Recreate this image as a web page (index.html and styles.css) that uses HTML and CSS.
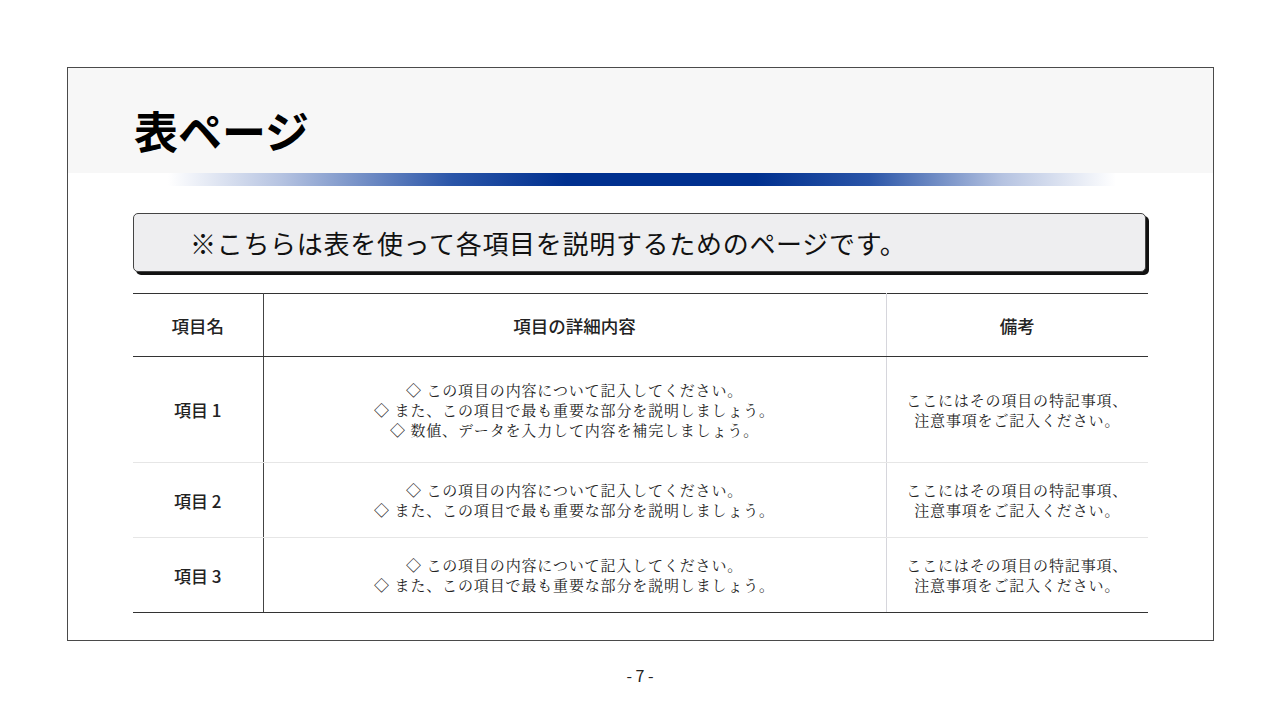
FILE: index.html
```html
<!DOCTYPE html>
<html lang="ja">
<head>
<meta charset="utf-8">
<title>表ページ</title>
<link rel="stylesheet" href="styles.css">
</head>
<body>
<div class="slide">
  <div class="head">
    <h1 class="title">表ページ</h1>
  </div>
  <div class="rule"></div>
  <div class="callout">※こちらは表を使って各項目を説明するためのページです。</div>
  <table class="tbl">
    <colgroup>
      <col class="c1"><col class="c2"><col class="c3">
    </colgroup>
    <thead>
      <tr class="hrow">
        <th class="col-name">項目名</th>
        <th class="col-detail">項目の詳細内容</th>
        <th class="col-note">備考</th>
      </tr>
    </thead>
    <tbody>
      <tr class="r1">
        <td class="col-name">項目 1</td>
        <td class="col-detail serif">◇ この項目の内容について記入してください。<br>◇ また、この項目で最も重要な部分を説明しましょう。<br>◇ 数値、データを入力して内容を補完しましょう。</td>
        <td class="col-note serif">ここにはその項目の特記事項、<br>注意事項をご記入ください。</td>
      </tr>
      <tr class="r2">
        <td class="col-name">項目 2</td>
        <td class="col-detail serif">◇ この項目の内容について記入してください。<br>◇ また、この項目で最も重要な部分を説明しましょう。</td>
        <td class="col-note serif">ここにはその項目の特記事項、<br>注意事項をご記入ください。</td>
      </tr>
      <tr class="r3">
        <td class="col-name">項目 3</td>
        <td class="col-detail serif">◇ この項目の内容について記入してください。<br>◇ また、この項目で最も重要な部分を説明しましょう。</td>
        <td class="col-note serif">ここにはその項目の特記事項、<br>注意事項をご記入ください。</td>
      </tr>
    </tbody>
  </table>
</div>
<div class="pager">- 7 -</div>
</body>
</html>
```

FILE: styles.css
```css
* { box-sizing: border-box; }
html, body { margin: 0; padding: 0; background: #ffffff; }
body {
  font-family: "Noto Sans CJK JP", "Noto Sans", sans-serif;
  color: #1a1a1a;
  width: 1280px;
  height: 720px;
  overflow: hidden;
}
.slide {
  width: 1147px;
  height: 574px;
  margin: 67px 0 0 67px;
  border: 1px solid #4a4a4a;
  background: #ffffff;
}
.head {
  height: 105px;
  background: #f7f7f7;
  padding: 40px 0 0 66px;
}
.title {
  margin: 0;
  font-size: 44px;
  line-height: 44px;
  font-weight: 700;
  color: #000;
}
.rule {
  height: 13px;
  margin-left: 100px;
  width: 948px;
  background: linear-gradient(90deg,
    rgba(255,255,255,0) 0%,
    rgba(120,145,200,0.55) 12%,
    #2a55a8 30%,
    #00308f 42%,
    #00308f 62%,
    #2a55a8 74%,
    rgba(120,145,200,0.55) 88%,
    rgba(255,255,255,0) 100%);
}
.callout {
  margin: 27px 0 0 65px;
  width: 1013px;
  height: 59px;
  border: 1px solid #444;
  border-radius: 5px;
  background: #eeeef0;
  box-shadow: 3px 3px 0 #111;
  padding-left: 56px;
  display: flex;
  align-items: center;
  font-size: 26px;
  font-weight: 400;
  color: #111;
  letter-spacing: 0.7px;
}
.tbl {
  margin: 21px 0 0 65px;
  width: 1015px;
  border-collapse: collapse;
  table-layout: fixed;
}
.c1 { width: 130px; }
.c2 { width: 623px; }
.c3 { width: 262px; }
.tbl th, .tbl td {
  padding: 0;
  text-align: center;
  vertical-align: middle;
}
.tbl th {
  height: 63px;
  font-size: 17.5px;
  font-weight: 500;
  color: #222;
  border-top: 1px solid #333;
  border-bottom: 1px solid #333;
}
.tbl td {
  border-bottom: 1px solid #e6e6e6;
}
.tbl tr.r3 td { border-bottom: 1px solid #333; }
.tbl .col-name { border-right: 1px solid #444; }
.tbl .col-detail { border-right: 1px solid #d6d6dc; }
.tbl td.col-name {
  font-size: 17px;
  font-weight: 500;
  color: #222;
}
.r1 td { height: 106px; }
.r2 td, .r3 td { height: 75px; }
.serif {
  font-family: "Noto Serif CJK JP", "Liberation Serif", "Noto Sans CJK JP", serif;
  font-size: 15px;
  line-height: 20px;
  letter-spacing: 0.85px;
  color: #222;
}
.pager {
  margin-top: 24px;
  text-align: center;
  font-size: 16px;
  line-height: 20px;
  color: #222;
}
```
